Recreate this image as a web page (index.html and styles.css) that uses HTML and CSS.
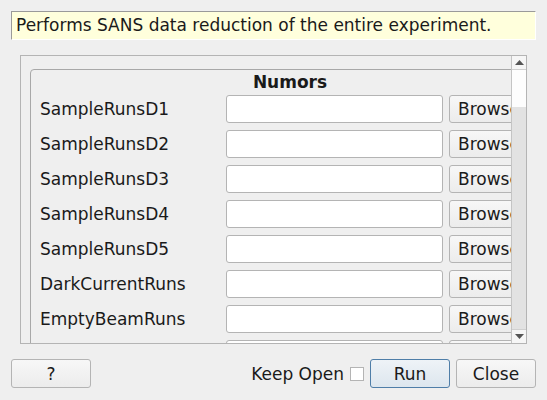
FILE: index.html
```html
<!DOCTYPE html>
<html>
<head>
<meta charset="utf-8">
<link rel="stylesheet" href="styles.css">
</head>
<body>
<div class="desc">Performs SANS data reduction of the entire experiment.</div>
<div class="scroll">
  <div class="viewport">
    <div class="group">
      <div class="gtitle">Numors</div>
      <div class="row"><span class="lbl">SampleRunsD1</span><span class="edit"></span><span class="btn browse">Browse</span></div>
      <div class="row"><span class="lbl">SampleRunsD2</span><span class="edit"></span><span class="btn browse">Browse</span></div>
      <div class="row"><span class="lbl">SampleRunsD3</span><span class="edit"></span><span class="btn browse">Browse</span></div>
      <div class="row"><span class="lbl">SampleRunsD4</span><span class="edit"></span><span class="btn browse">Browse</span></div>
      <div class="row"><span class="lbl">SampleRunsD5</span><span class="edit"></span><span class="btn browse">Browse</span></div>
      <div class="row"><span class="lbl">DarkCurrentRuns</span><span class="edit"></span><span class="btn browse">Browse</span></div>
      <div class="row"><span class="lbl">EmptyBeamRuns</span><span class="edit"></span><span class="btn browse">Browse</span></div>
      <div class="row"><span class="lbl">EmptyBeamRuns</span><span class="edit"></span><span class="btn browse">Browse</span></div>
    </div>
  </div>
  <div class="vbar">
    <div class="arrow"><svg width="9" height="5" viewBox="0 0 9 5"><path d="M0 5 L4.5 0 L9 5 Z" fill="#555"/></svg></div>
    <div class="track"><div class="handle"></div></div>
    <div class="arrow down"><svg width="9" height="5" viewBox="0 0 9 5"><path d="M0 0 L4.5 5 L9 0 Z" fill="#555"/></svg></div>
  </div>
</div>
<div class="bottom">
  <span class="btn action">?</span>
  <span class="spacer"></span>
  <span class="keep">Keep Open</span>
  <span class="check"></span>
  <span class="btn action run">Run</span>
  <span class="btn action">Close</span>
</div>
</body>
</html>
```

FILE: styles.css
```css
html, body {
  margin: 0;
  padding: 0;
  background: #efefef;
  font-family: "DejaVu Sans", sans-serif;
  font-size: 17px;
  color: #1a1a1a;
  width: 547px;
  height: 400px;
  overflow: hidden;
}
.desc {
  margin: 11px 11px 0 11px;
  height: 27px;
  background: #ffffdc;
  border-top: 1px solid #9a9a9a;
  border-left: 1px solid #9a9a9a;
  border-right: 1px solid #ffffff;
  border-bottom: 1px solid #ffffff;
  padding-left: 4px;
  line-height: 26px;
  box-sizing: content-box;
}
.scroll {
  margin: 15px 0 0 20px;
  width: 505px;
  height: 287px;
  border: 1px solid #b4b4b4;
  display: flex;
}
.viewport {
  flex: 1;
  overflow: hidden;
  padding: 13px 0 0 9px;
}
.group {
  box-sizing: border-box;
  width: 520px;
  border: 1px solid #a8a8a8;
  border-radius: 4px;
  padding: 0 0 0 9px;
  display: flex;
  flex-direction: column;
  gap: 7px;
}
.gtitle {
  font-weight: bold;
  text-align: center;
  height: 18px;
  line-height: 24px;
  margin-left: -9px;
}
.row {
  display: flex;
  align-items: center;
  height: 28px;
}
.lbl {
  width: 186px;
  flex: none;
  white-space: nowrap;
}
.edit {
  width: 215px;
  height: 26px;
  background: #fff;
  border: 1px solid #b4b4b4;
  border-radius: 3px;
  flex: none;
}
.btn {
  display: flex;
  align-items: center;
  justify-content: center;
  box-sizing: border-box;
  border: 1px solid #b4b4b4;
  border-radius: 3px;
  background: linear-gradient(#f7f7f7, #ececec);
  flex: none;
}
.browse {
  margin-left: 6px;
  width: 80px;
  height: 28px;
  justify-content: flex-start;
  padding-left: 8px;
}
.vbar {
  width: 14px;
  border-left: 1px solid #c4c4c4;
  display: flex;
  flex-direction: column;
  background: #fdfdfd;
}
.arrow {
  height: 13px;
  border-bottom: 1px solid #d0d0d0;
  display: flex;
  align-items: center;
  justify-content: center;
  background: #f6f6f6;
}
.arrow.down {
  border-bottom: none;
  border-top: 1px solid #d0d0d0;
}
.track {
  flex: 1;
  padding-top: 37px;
  display: flex;
  flex-direction: column;
}
.handle {
  flex: 1;
  background: #e2e2e2;
}
.bottom {
  display: flex;
  align-items: center;
  margin: 15px 11px 0 11px;
  height: 29px;
}
.action {
  width: 80px;
  height: 29px;
  box-sizing: border-box;
}
.spacer { flex: 1; }
.keep { margin-right: 6px; }
.check {
  width: 12px;
  height: 12px;
  border: 1px solid #b4b4b4;
  background: #fff;
  margin-right: 6px;
}
.run {
  border-color: #4f7ea8;
  background: linear-gradient(#eef3f7, #dde6ee);
  margin-right: 6px;
}
```
